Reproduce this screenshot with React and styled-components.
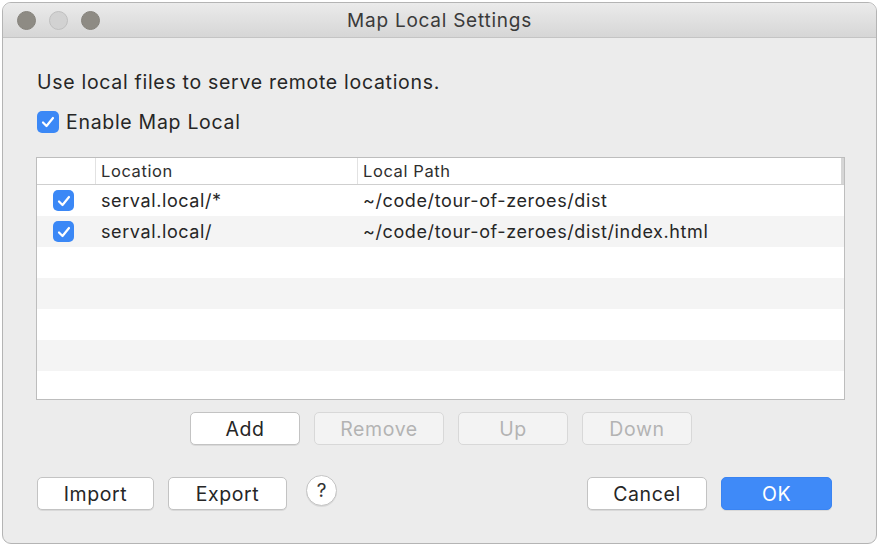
import React from 'react';
import styled, { createGlobalStyle } from 'styled-components';

const GlobalStyle = createGlobalStyle`
  html, body {
    margin: 0;
    padding: 0;
    background: #ffffff;
  }
  body {
    font-family: Inter, "Noto Sans", "Liberation Sans", sans-serif;
    color: #262626;
  }
`;

const Window = styled.div`
  margin: 2px 0 0 2px;
  width: 875px;
  height: 542px;
  box-sizing: border-box;
  border: 1px solid #b4b4b4;
  border-radius: 9px;
  background: #ececec;
  overflow: hidden;
  display: flex;
  flex-direction: column;
`;

const TitleBar = styled.div`
  height: 34px;
  flex: none;
  display: flex;
  align-items: center;
  position: relative;
  background: linear-gradient(#ebebeb, #d6d6d6);
  border-bottom: 1px solid #c4c4c4;
`;

const Lights = styled.div`
  display: flex;
  gap: 13px;
  padding-left: 14px;
`;

const Light = styled.span`
  width: 19px;
  height: 19px;
  border-radius: 50%;
  box-sizing: border-box;
  background: ${p => (p.$off ? '#d2d2d2' : '#8e8b84')};
  border: 1px solid ${p => (p.$off ? '#bfbfbf' : '#86837c')};
`;

const Title = styled.div`
  position: absolute;
  left: 0;
  right: 0;
  text-align: center;
  font-size: 19px;
  letter-spacing: 0.75px;
  color: #3a3a3a;
  pointer-events: none;
`;

const Body = styled.div`
  flex: 1;
  display: flex;
  flex-direction: column;
  padding: 32px 31px 0 33px;
`;

const Intro = styled.div`
  font-size: 19.5px;
  letter-spacing: 0.7px;
  line-height: 24px;
  padding-left: 1px;
`;

const CheckRow = styled.label`
  display: flex;
  align-items: center;
  gap: 7px;
  margin-top: 16px;
  padding-left: 1px;
  font-size: 19.5px;
  letter-spacing: 0.7px;
`;

const Box = styled.span`
  width: ${p => p.$size || 22}px;
  height: ${p => p.$size || 22}px;
  flex: none;
  border-radius: 5px;
  background: #3b88f6;
  display: flex;
  align-items: center;
  justify-content: center;
`;

const Table = styled.div`
  margin-top: 23px;
  height: 243px;
  box-sizing: border-box;
  border: 1px solid #bdbdbd;
  background: #ffffff;
  display: flex;
  flex-direction: column;
  overflow: hidden;
`;

const Grid = styled.div`
  display: grid;
  grid-template-columns: 58px 262px 1fr 3px;
  align-items: center;
`;

const HeadRow = styled(Grid)`
  height: 26px;
  flex: none;
  border-bottom: 1px solid #cfcfcf;
  font-size: 16.5px;
  letter-spacing: 0.6px;
  color: #2e2e2e;
`;

const HeadCell = styled.div`
  height: 100%;
  display: flex;
  align-items: center;
  padding-left: 5px;
  border-left: ${p => (p.$first ? 'none' : '1px solid #e2e2e2')};
`;

const Scroller = styled.div`
  height: 100%;
  background: #d6d6d6;
`;

const Row = styled(Grid)`
  height: 31px;
  flex: none;
  font-size: 18px;
  letter-spacing: 0.6px;
  background: ${p => (p.$alt ? '#f4f4f4' : '#ffffff')};
`;

const CheckCell = styled.div`
  display: flex;
  padding-left: 16px;
`;

const Cell = styled.div`
  padding-left: 6px;
  white-space: nowrap;
`;

const ActionRow = styled.div`
  display: flex;
  justify-content: center;
  gap: 14px;
  margin-top: 12px;
  padding-left: 1px;
`;

const Button = styled.button`
  width: ${p => p.$w || 110}px;
  height: 33px;
  box-sizing: border-box;
  border-radius: 5px;
  border: 1px solid ${p => (p.disabled ? '#d8d8d8' : '#c3c3c3')};
  background: ${p => (p.disabled ? '#f3f3f3' : '#ffffff')};
  box-shadow: ${p => (p.disabled ? 'none' : '0 1px 0 rgba(0,0,0,0.08)')};
  color: ${p => (p.disabled ? '#b3b3b3' : '#262626')};
  font-family: inherit;
  font-size: 19.5px;
  letter-spacing: 0.6px;
  padding: 0;
`;

const PrimaryButton = styled(Button)`
  background: #3f8af8;
  border-color: #3a84f2;
  color: #ffffff;
`;

const Footer = styled.div`
  display: flex;
  align-items: center;
  justify-content: space-between;
  margin-top: 32px;
  padding: 0 13px 0 1px;
`;

const Group = styled.div`
  display: flex;
  align-items: center;
  gap: 14px;
`;

const Help = styled.button`
  width: 31px;
  height: 31px;
  margin-left: 5px;
  margin-top: -6px;
  border-radius: 50%;
  box-sizing: border-box;
  border: 1px solid #c4c4c4;
  background: #ffffff;
  box-shadow: 0 1px 0 rgba(0,0,0,0.08);
  font-family: inherit;
  font-size: 19px;
  color: #333;
  padding: 0;
`;

function Check({ size }) {
  return (
    <Box $size={size}>
      <svg width="14" height="12" viewBox="0 0 14 12">
        <path d="M2 6.5 L5.5 10 L12 2" fill="none" stroke="#fff" strokeWidth="2.2" strokeLinecap="round" strokeLinejoin="round" />
      </svg>
    </Box>
  );
}

const rows = [
  { location: 'serval.local/*', path: '~/code/tour-of-zeroes/dist' },
  { location: 'serval.local/', path: '~/code/tour-of-zeroes/dist/index.html' },
];

export default function App() {
  const empty = [0, 1, 2, 3, 4];
  return (
    <>
      <GlobalStyle />
      <Window>
        <TitleBar>
          <Lights>
            <Light />
            <Light $off />
            <Light />
          </Lights>
          <Title>Map Local Settings</Title>
        </TitleBar>
        <Body>
          <Intro>Use local files to serve remote locations.</Intro>
          <CheckRow>
            <Check />
            Enable Map Local
          </CheckRow>
          <Table>
            <HeadRow>
              <HeadCell $first />
              <HeadCell>Location</HeadCell>
              <HeadCell>Local Path</HeadCell>
              <Scroller />
            </HeadRow>
            {rows.map((r, i) => (
              <Row key={r.location} $alt={i % 2 === 1}>
                <CheckCell><Check size={21} /></CheckCell>
                <Cell>{r.location}</Cell>
                <Cell>{r.path}</Cell>
                <div />
              </Row>
            ))}
            {empty.map(i => (
              <Row key={i} $alt={i % 2 === 1} />
            ))}
          </Table>
          <ActionRow>
            <Button>Add</Button>
            <Button disabled $w={130}>Remove</Button>
            <Button disabled>Up</Button>
            <Button disabled>Down</Button>
          </ActionRow>
          <Footer>
            <Group>
              <Button $w={117}>Import</Button>
              <Button $w={119}>Export</Button>
              <Help>?</Help>
            </Group>
            <Group>
              <Button $w={120}>Cancel</Button>
              <PrimaryButton $w={111}>OK</PrimaryButton>
            </Group>
          </Footer>
        </Body>
      </Window>
    </>
  );
}
